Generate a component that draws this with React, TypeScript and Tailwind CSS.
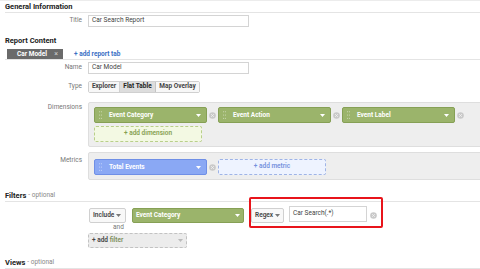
import React from "react";

function Caret({ color = "#fff" }: { color?: string }) {
  return (
    <svg width="5" height="3" viewBox="0 0 5 3" className="shrink-0">
      <polygon points="0,0 5,0 2.5,3" fill={color} />
    </svg>
  );
}

function Grip() {
  return (
    <svg width="3" height="8" viewBox="0 0 3 8" className="shrink-0">
      {[0.8, 4, 7.2].map((y) => (
        <g key={y}>
          <circle cx="0.6" cy={y} r="0.55" fill="#ffffff" fillOpacity="0.6" />
          <circle cx="2.4" cy={y} r="0.55" fill="#ffffff" fillOpacity="0.6" />
        </g>
      ))}
    </svg>
  );
}

function RemoveDot() {
  return (
    <svg width="7" height="7" viewBox="0 0 7 7" className="shrink-0">
      <circle cx="3.5" cy="3.5" r="3.3" fill="#c9c9c9" />
      <path d="M2.2 2.2 L4.8 4.8 M4.8 2.2 L2.2 4.8" stroke="#f2f2f2" strokeWidth="0.9" />
    </svg>
  );
}

function Pill({ label, blue = false }: { label: string; blue?: boolean }) {
  return (
    <div
      className={`w-[113px] h-[16px] rounded-[2px] flex items-center pl-[4px] pr-[5px] gap-[7px] border ${
        blue ? "bg-[#8aa8f4] border-[#6f8fe6]" : "bg-[#9bb46b] border-[#86a055]"
      }`}
    >
      <Grip />
      <span className="text-[6.5px] font-bold text-white flex-1 leading-none">{label}</span>
      <Caret />
    </div>
  );
}

function Section({ title, optional = false }: { title: string; optional?: boolean }) {
  return (
    <div className="ml-[5px] h-[12px] flex items-center gap-[2px] border-b border-[#e4e4e4]">
      <span className="text-[7.5px] font-bold text-[#222]">{title}</span>
      {optional && <span className="text-[6.5px] text-[#888]">- optional</span>}
    </div>
  );
}

function Label({ text }: { text: string }) {
  return <div className="w-[83px] shrink-0 text-right text-[6.5px] text-[#777] pr-[1px]">{text}</div>;
}

export default function App() {
  return (
    <div className="w-[480px] h-[269px] overflow-hidden bg-white relative font-[Roboto,Arial,sans-serif] text-[#333] border-t border-[#ececec]">
      <Section title="General Information" />

      <div className="mt-[2px] flex items-center gap-[5px] h-[12px]">
        <Label text="Title" />
        <div className="w-[161px] h-[12px] border border-[#d4d4d4] text-[6.5px] pl-[3px] flex items-center text-[#444]">
          Car Search Report
        </div>
      </div>

      <div className="ml-[5px] mt-[8px] h-[12px] flex items-center">
        <span className="text-[7.5px] font-bold text-[#222]">Report Content</span>
      </div>

      <div className="ml-[5px] h-[13px] border-b border-[#e4e4e4] pl-[2px] flex items-end gap-[11px]">
        <div className="w-[56px] h-[10px] bg-[#6a6a6a] flex items-center justify-between pl-[10px] pr-[5px]">
          <span className="text-[6.5px] font-bold text-white leading-none">Car Model</span>
          <span className="text-[7px] text-[#cfcfcf] leading-none">×</span>
        </div>
        <div className="h-[10px] flex items-center text-[6.5px] font-bold text-[#3a6fc4] leading-none">
          + add report tab
        </div>
      </div>

      <div className="mt-[2px] flex items-center gap-[5px] h-[12px]">
        <Label text="Name" />
        <div className="w-[161px] h-[12px] border border-[#d4d4d4] text-[6.5px] pl-[3px] flex items-center text-[#444]">
          Car Model
        </div>
      </div>

      <div className="mt-[7px] flex items-center gap-[5px] h-[12px]">
        <Label text="Type" />
        <div className="h-[12px] flex border border-[#d0d0d0] rounded-[2px] text-[6.5px] font-bold text-[#444]">
          <div className="w-[31px] bg-[#f7f7f7] flex items-center justify-center border-r border-[#d0d0d0]">Explorer</div>
          <div className="w-[36px] bg-[#dddddd] flex items-center justify-center border-r border-[#c4c4c4] text-[#222]">
            Flat Table
          </div>
          <div className="w-[43px] bg-[#f7f7f7] flex items-center justify-center">Map Overlay</div>
        </div>
      </div>

      <div className="mt-[9px] flex items-start gap-[5px]">
        <div className="pt-[1px]">
          <Label text="Dimensions" />
        </div>
        <div className="flex-1 h-[45px] bg-[#eeeeee] border border-[#dedede] rounded-l-[2px] pl-[5px] pt-[4px] mr-[-4px]">
          <div className="flex items-center">
            <Pill label="Event Category" />
            <div className="mx-[2px]">
              <RemoveDot />
            </div>
            <Pill label="Event Action" />
            <div className="mx-[2px]">
              <RemoveDot />
            </div>
            <Pill label="Event Label" />
            <div className="mx-[2px]">
              <RemoveDot />
            </div>
          </div>
          <div className="mt-[3px] w-[108px] h-[16px] bg-[#f3f9e3] border border-dashed border-[#b9cf8a] rounded-[2px] flex items-center justify-center text-[6.5px] font-semibold text-[#86a052]">
            + add dimension
          </div>
        </div>
      </div>

      <div className="mt-[5px] flex items-start gap-[5px]">
        <div className="pt-[4px]">
          <Label text="Metrics" />
        </div>
        <div className="flex-1 h-[28px] bg-[#eeeeee] border border-[#dedede] rounded-l-[2px] pl-[5px] pt-[6px] mr-[-4px]">
          <div className="flex items-center">
            <Pill label="Total Events" blue />
            <div className="mx-[2px]">
              <RemoveDot />
            </div>
            <div className="w-[108px] h-[16px] bg-[#eef3ff] border border-dashed border-[#9fb4e6] rounded-[2px] flex items-center justify-center text-[6.5px] font-semibold text-[#7591dd]">
              + add metric
            </div>
          </div>
        </div>
      </div>

      <div className="mt-[10px]">
        <Section title="Filters" optional />
      </div>

      <div className="relative">
        <div className="mt-[6px] ml-[89px] flex items-center h-[15px]">
          <div className="w-[37px] h-[15px] bg-[#f8f8f8] border border-[#d0d0d0] rounded-[2px] flex items-center justify-between pl-[3px] pr-[4px]">
            <span className="text-[6.5px] font-semibold text-[#444]">Include</span>
            <Caret color="#777" />
          </div>
          <div className="ml-[6px] w-[112px] h-[15px] bg-[#9bb46b] border border-[#86a055] rounded-[2px] flex items-center justify-between pl-[3px] pr-[3px]">
            <span className="text-[6.5px] font-bold text-white">Event Category</span>
            <Caret />
          </div>
          <div className="ml-[7px] w-[33px] h-[15px] bg-[#f8f8f8] border border-[#d0d0d0] rounded-[2px] flex items-center justify-between pl-[3px] pr-[3px]">
            <span className="text-[6.5px] font-semibold text-[#444]">Regex</span>
            <Caret color="#777" />
          </div>
          <div className="ml-[5px] w-[78px] h-[16px] mt-[-4px] border border-[#d4d4d4] bg-white flex items-center pl-[3px] text-[6.5px] text-[#444]">
            Car Search(.*)
          </div>
          <div className="ml-[3px]">
            <RemoveDot />
          </div>
        </div>
        <div className="ml-[113px] h-[10px] flex items-center text-[6.5px] text-[#777]">and</div>
        <div className="ml-[88px] w-[99px] h-[15px] bg-[#ececec] border border-dashed border-[#c2c2c2] rounded-[2px] flex items-center justify-between pl-[3px] pr-[3px]">
          <span className="text-[6.5px] font-semibold text-[#444]">
            + add <span className="text-[#7d8f5c]">filter</span>
          </span>
          <Caret color="#bbb" />
        </div>
        <div className="absolute left-[249px] top-[-11px] w-[134px] h-[31px] border-2 border-[#e8141b] rounded-[2px]" />
      </div>

      <div className="mt-[9px]">
        <Section title="Views" optional />
      </div>
    </div>
  );
}
